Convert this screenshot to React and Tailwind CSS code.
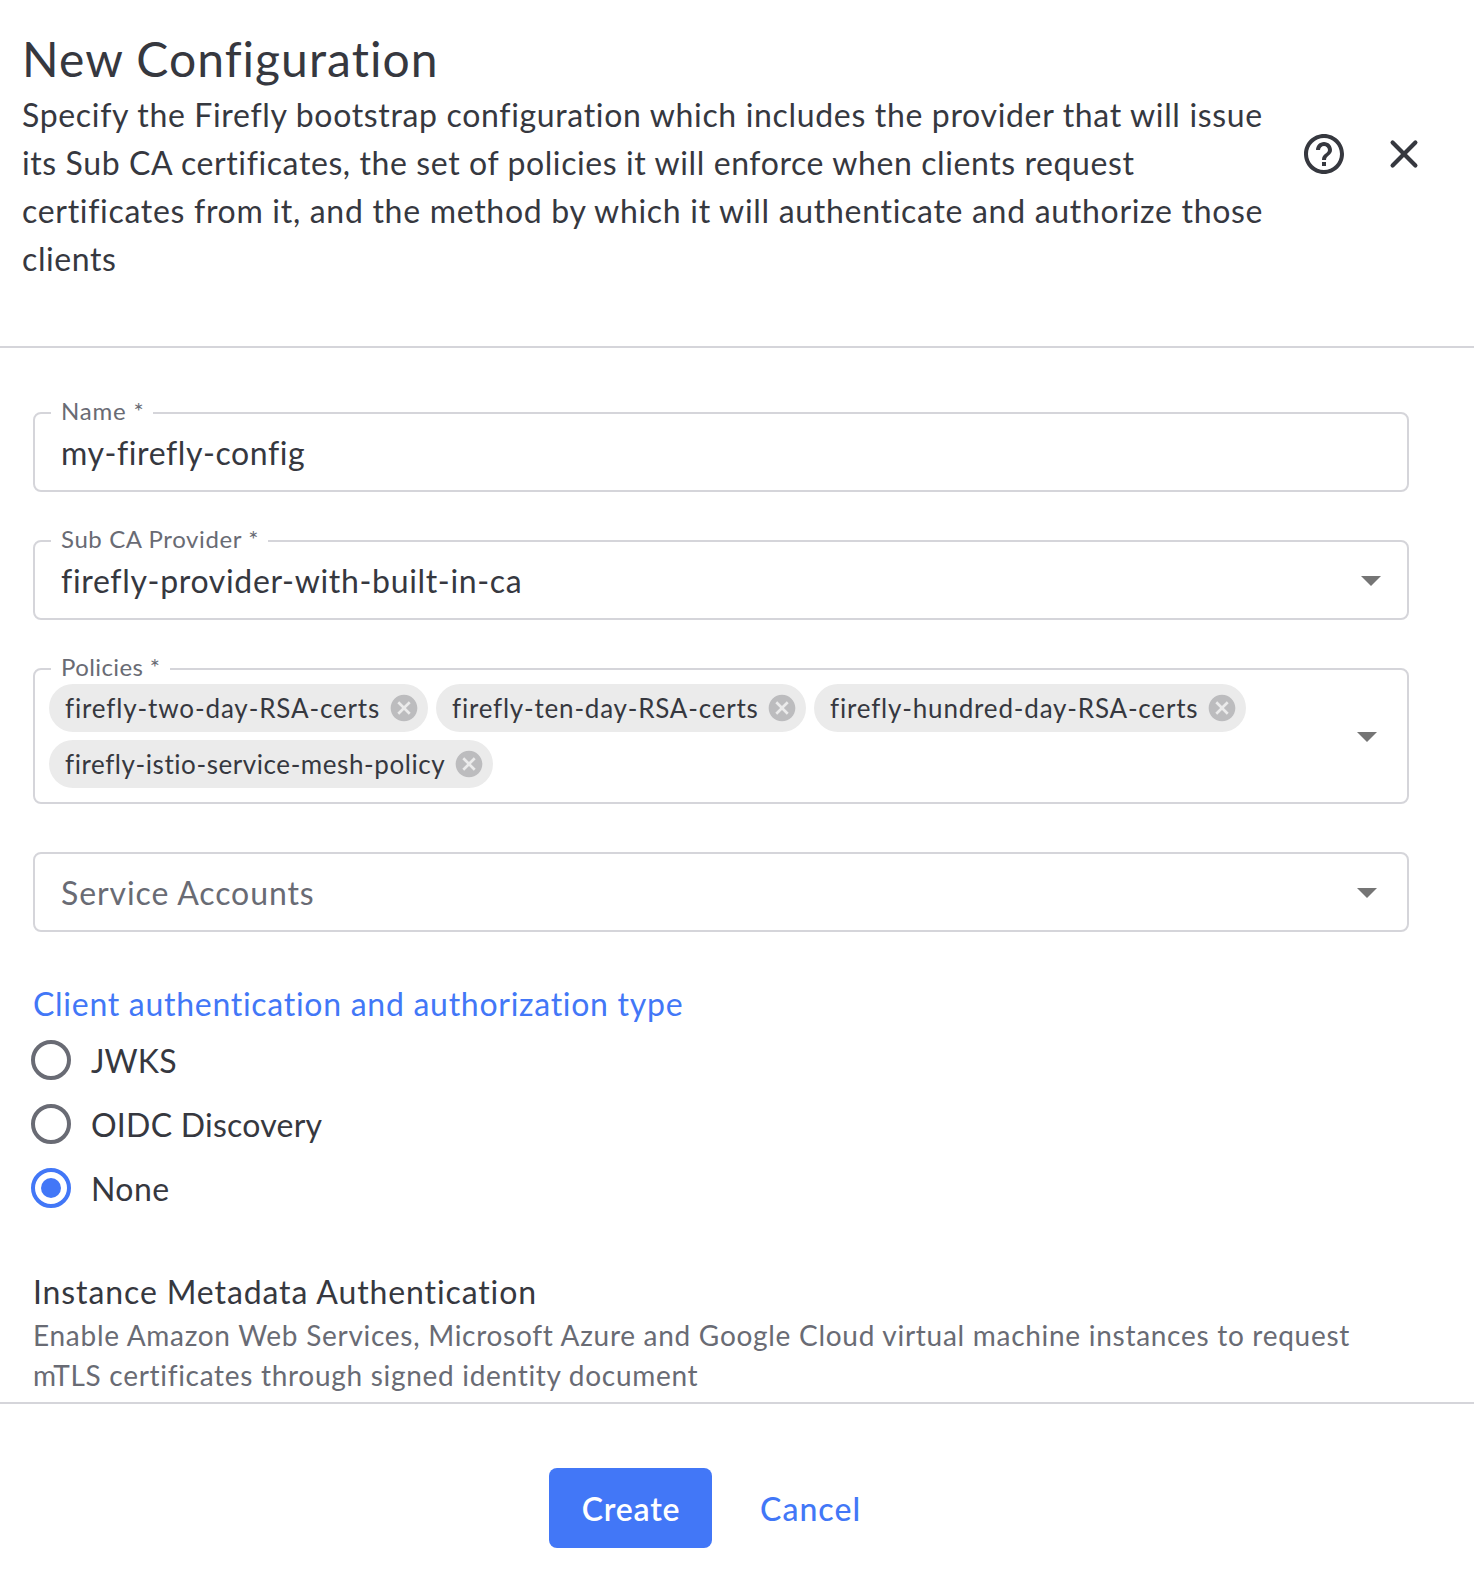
import React from "react";

const chips = [
  { label: "firefly-two-day-RSA-certs", box: "w-[379px]", text: "tracking-[0.86px]" },
  { label: "firefly-ten-day-RSA-certs", box: "w-[370px]", text: "tracking-[0.79px]" },
  { label: "firefly-hundred-day-RSA-certs", box: "w-[432px]", text: "tracking-[0.82px]" },
  { label: "firefly-istio-service-mesh-policy", box: "w-[444px]", text: "tracking-[0.57px]" },
];

const radios = [
  { label: "JWKS", checked: false, text: "tracking-[0.1px]" },
  { label: "OIDC Discovery", checked: false, text: "tracking-[0.25px]" },
  { label: "None", checked: true, text: "tracking-[0.4px]" },
];

function HelpIcon() {
  return (
    <svg viewBox="0 0 24 24" className="size-12" fill="currentColor">
      <path d="M11 18h2v-2h-2v2zm1-16C6.48 2 2 6.48 2 12s4.48 10 10 10 10-4.48 10-10S17.52 2 12 2zm0 18c-4.41 0-8-3.59-8-8s3.59-8 8-8 8 3.59 8 8-3.59 8-8 8zm0-14c-2.21 0-4 1.79-4 4h2c0-1.1.9-2 2-2s2 .9 2 2c0 2-3 1.75-3 5h2c0-2.25 3-2.5 3-5 0-2.21-1.79-4-4-4z" />
    </svg>
  );
}

function CloseIcon() {
  return (
    <svg viewBox="0 0 24 24" className="size-12" fill="none" stroke="currentColor" strokeWidth="2.1" strokeLinecap="round">
      <path d="M6.3 6.3 17.7 17.7M17.7 6.3 6.3 17.7" />
    </svg>
  );
}

function Arrow() {
  return (
    <svg viewBox="0 0 24 24" className="size-12 shrink-0" fill="#757575">
      <path d="M7 10l5 5 5-5z" />
    </svg>
  );
}

function RemoveIcon() {
  return (
    <svg viewBox="0 0 24 24" className="size-8 shrink-0" fill="#bcbcbe">
      <path d="M12 2C6.47 2 2 6.47 2 12s4.47 10 10 10 10-4.47 10-10S17.53 2 12 2zm5 13.59L15.59 17 12 13.41 8.41 17 7 15.59 10.59 12 7 8.41 8.41 7 12 10.59 15.59 7 17 8.41 13.41 12 17 15.59z" />
    </svg>
  );
}

function Radio({ checked }) {
  return (
    <svg viewBox="0 0 24 24" className={checked ? "size-12 text-[#4277f7]" : "size-12 text-[#696b74]"}>
      <circle cx="12" cy="12" r="9" fill="none" stroke="currentColor" strokeWidth="2" />
      {checked && <circle cx="12" cy="12" r="5" fill="currentColor" />}
    </svg>
  );
}

function Field({ label, labelClass, className, children }) {
  return (
    <div className={"relative flex items-center rounded-lg border-2 border-[#d5d5da] " + className}>
      {label && (
        <span className={"absolute -top-[15px] left-4 whitespace-nowrap bg-white text-2xl leading-6 text-[#696b74] " + labelClass}>
          {label}
        </span>
      )}
      {children}
    </div>
  );
}

export default function App() {
  return (
    <div className="flex h-[1582px] w-[1474px] flex-col overflow-hidden bg-white font-['Lato',sans-serif] text-[32px] leading-[48px] text-[#36383f]">
      <header className="flex h-[348px] shrink-0 border-b-2 border-[#d5d5da] pl-[22px] pr-[46px] pt-[29px]">
        <div className="flex-1 whitespace-nowrap">
          <h1 className="text-[48px] leading-[60px] tracking-[1.06px]">New Configuration</h1>
          <p className="mt-0.5">
            <span className="block tracking-[0.665px]">Specify the Firefly bootstrap configuration which includes the provider that will issue</span>
            <span className="block tracking-[0.6px]">its Sub CA certificates, the set of policies it will enforce when clients request</span>
            <span className="block tracking-[0.7px]">certificates from it, and the method by which it will authenticate and authorize those</span>
            <span className="block tracking-[0.6px]">clients</span>
          </p>
        </div>
        <div className="flex gap-8 pt-[101px]">
          <HelpIcon />
          <CloseIcon />
        </div>
      </header>

      <main className="h-[1056px] shrink-0 border-b-2 border-[#d5d5da] pl-[33px] pr-[65px] pt-16">
        <div className="flex flex-col gap-12">
          <Field label="Name *" labelClass="w-[102px] pl-[10px] tracking-[0.8px]" className="h-20">
            <span className="pl-[26px] pt-0.5 tracking-[0.58px]">my-firefly-config</span>
          </Field>
          <Field label="Sub CA Provider *" labelClass="w-[217px] pl-[10px] tracking-[0.6px]" className="h-20 justify-between pl-[26px] pr-3">
            <span className="pt-px tracking-[0.67px]">firefly-provider-with-built-in-ca</span>
            <Arrow />
          </Field>
          <Field label="Policies *" labelClass="w-[119px] pl-[10px] tracking-[0.4px]" className="h-[136px] justify-between pl-3.5 pr-4">
            <div className="flex w-[1260px] flex-wrap gap-2">
              {chips.map((c) => (
                <div key={c.label} className={"flex h-12 items-center justify-between rounded-full bg-[#ebebeb] pl-4 pr-2 " + c.box}>
                  <span className={"whitespace-nowrap text-[26px] " + c.text}>{c.label}</span>
                  <RemoveIcon />
                </div>
              ))}
            </div>
            <Arrow />
          </Field>
          <Field className="h-20 justify-between pl-[26px] pr-4">
            <span className="pt-0.5 tracking-[0.9px] text-[#696b74]">Service Accounts</span>
            <Arrow />
          </Field>
        </div>

        <h2 className="mt-12 tracking-[0.72px] text-[#4277f7]">Client authentication and authorization type</h2>
        <div className="-ml-1.5">
          {radios.map((r) => (
            <div key={r.label} className="flex h-16 items-center gap-4">
              <Radio checked={r.checked} />
              <span className={"pt-0.5 " + r.text}>{r.label}</span>
            </div>
          ))}
        </div>

        <h3 className="-mb-px mt-12 tracking-[0.89px]">Instance Metadata Authentication</h3>
        <p className="whitespace-nowrap text-[28px] leading-10 text-[#696b74]">
          <span className="block tracking-[0.72px]">Enable Amazon Web Services, Microsoft Azure and Google Cloud virtual machine instances to request</span>
          <span className="block tracking-[0.7px]">mTLS certificates through signed identity document</span>
        </p>
      </main>

      <footer className="flex gap-12 pl-[549px] pt-16">
        <button className="h-20 w-[163px] rounded-lg bg-[#4277f7] pl-px pt-px font-semibold tracking-[0.81px] text-white">Create</button>
        <button className="h-20 pt-px font-medium tracking-[1.05px] text-[#4277f7]">Cancel</button>
      </footer>
    </div>
  );
}
